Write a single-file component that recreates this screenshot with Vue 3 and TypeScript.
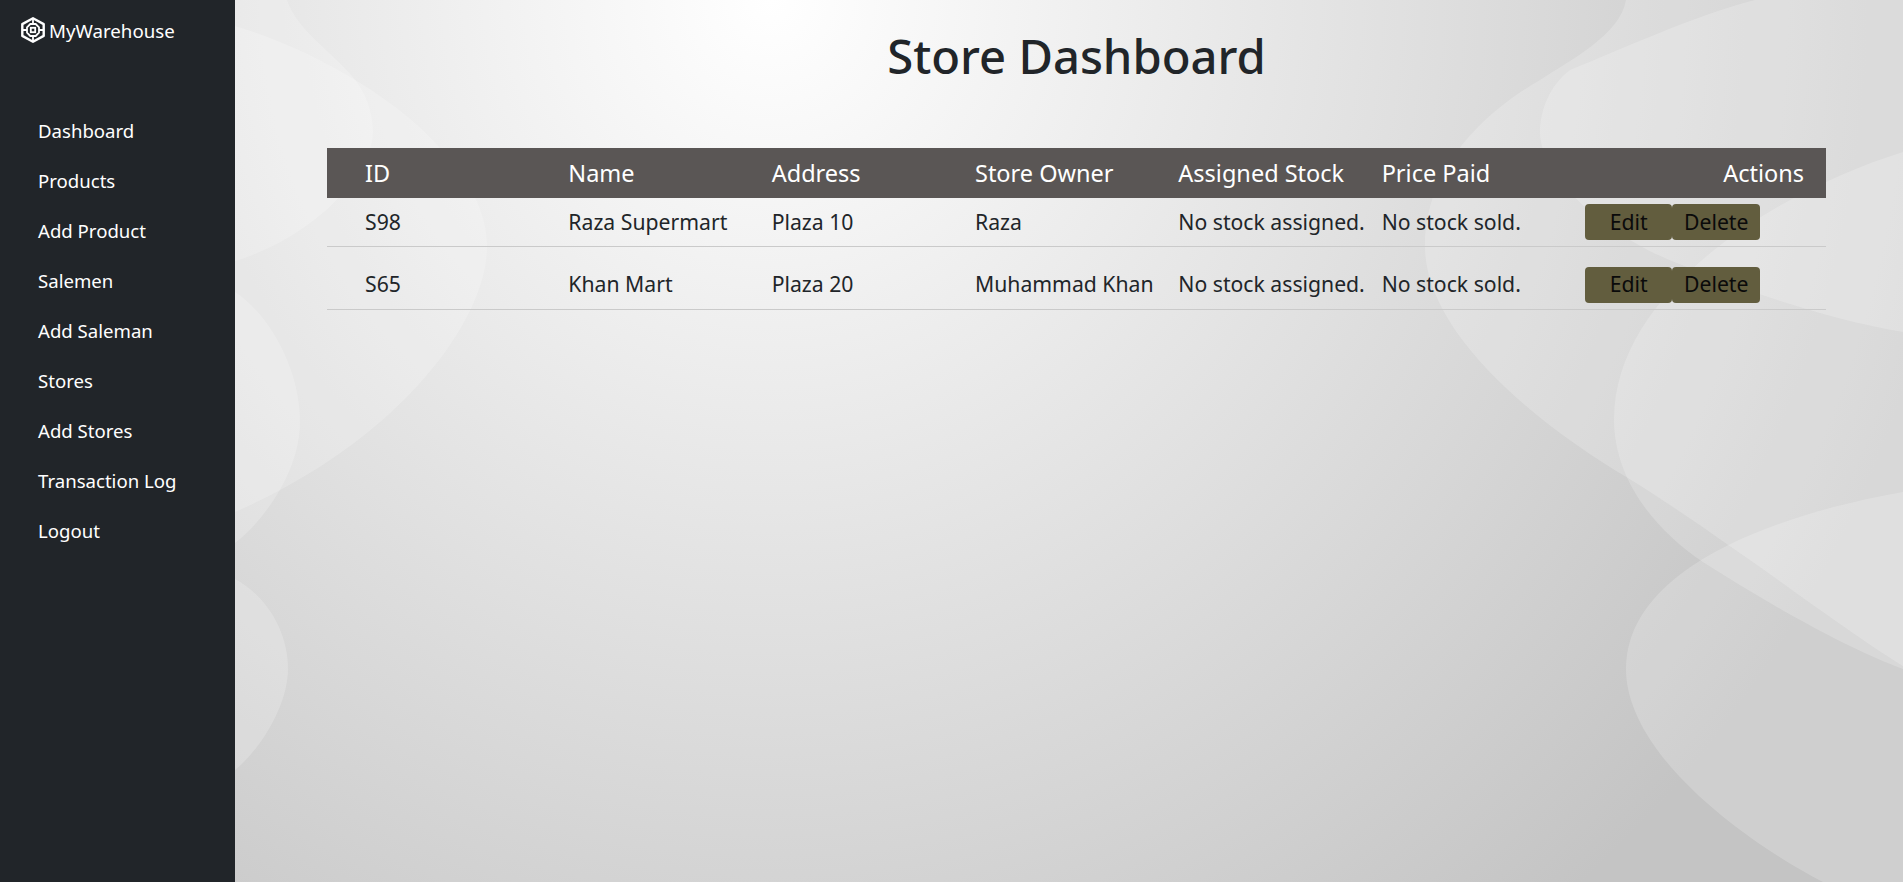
<script setup lang="ts">
interface Store {
  id: string
  name: string
  address: string
  owner: string
  stock: string
  price: string
}

const navItems: string[] = [
  'Dashboard',
  'Products',
  'Add Product',
  'Salemen',
  'Add Saleman',
  'Stores',
  'Add Stores',
  'Transaction Log',
  'Logout',
]

const stores: Store[] = [
  { id: 'S98', name: 'Raza Supermart', address: 'Plaza 10', owner: 'Raza', stock: 'No stock assigned.', price: 'No stock sold.' },
  { id: 'S65', name: 'Khan Mart', address: 'Plaza 20', owner: 'Muhammad Khan', stock: 'No stock assigned.', price: 'No stock sold.' },
]

const headers: string[] = ['ID', 'Name', 'Address', 'Store Owner', 'Assigned Stock', 'Price Paid']

const blobs: string[] = [
  'M287 0 C297 30 330 50 352 76 C366 92 373 112 373 132 C373 170 320 235 235 261 L235 0 Z',
  'M235 26 C300 45 400 95 450 160 C480 195 487 225 487 247 C487 320 400 440 235 512 Z',
  'M235 292 C270 315 300 370 300 422 C300 470 265 520 235 543 Z',
  'M235 579 C265 595 288 630 288 669 C288 705 260 750 235 770 Z',
  'M1626 0 C1620 35 1570 60 1540 80 C1480 115 1425 170 1425 247 C1425 330 1530 420 1628 478 C1720 535 1830 620 1903 666 L1903 0 Z',
  'M1755 0 C1690 17 1620 50 1570 70 C1550 85 1540 110 1540 132 C1540 175 1600 230 1667 259 C1730 285 1820 318 1903 332 L1903 0 Z',
  'M1903 152 C1780 190 1614 290 1614 419 C1614 480 1655 530 1703 562 C1770 605 1850 650 1903 669 Z',
  'M1903 492 C1800 510 1626 560 1626 669 C1626 760 1760 850 1823 882 L1903 882 Z',
]
</script>

<template>
  <div class="layout">
    <aside class="sidebar">
      <div class="brand">
        <svg class="logo" viewBox="0 0 24 26" fill="none" stroke="#fff">
          <path d="M12 1.3 22.7 7.1v11.8L12 24.7 1.3 18.9V7.1Z" stroke-width="2.4" stroke-linejoin="round" />
          <path d="M9.3 7h5.4L18 10.3v5.4L14.7 19H9.3L6 15.7v-5.4Z" stroke-width="1.8" stroke-linejoin="round" />
          <rect x="9.8" y="10.8" width="4.4" height="4.4" stroke-width="1.8" />
          <path d="M12 2v5M12 19v5M2 13h4M18 13h4" stroke-width="1.8" />
        </svg>
        <span>MyWarehouse</span>
      </div>
      <nav class="nav">
        <a v-for="item in navItems" :key="item" class="nav-link">{{ item }}</a>
      </nav>
    </aside>

    <main class="main">
      <svg class="waves" viewBox="235 0 1668 882" preserveAspectRatio="none" aria-hidden="true">
        <path v-for="(d, i) in blobs" :key="i" :d="d" fill="#fff" fill-opacity="0.2" />
      </svg>
      <div class="content">
        <h1 class="title">Store Dashboard</h1>
        <div class="table">
          <div class="head">
            <span v-for="h in headers" :key="h">{{ h }}</span>
            <span class="actions-head">Actions</span>
          </div>
          <div v-for="s in stores" :key="s.id" class="row">
            <span class="cell">{{ s.id }}</span>
            <span class="cell">{{ s.name }}</span>
            <span class="cell">{{ s.address }}</span>
            <span class="cell">{{ s.owner }}</span>
            <span class="cell">{{ s.stock }}</span>
            <span class="cell">{{ s.price }}</span>
            <span class="actions">
              <button class="btn">Edit</button>
              <button class="btn">Delete</button>
            </span>
          </div>
        </div>
      </div>
    </main>
  </div>
</template>

<style scoped>
.layout {
  display: flex;
  height: 882px;
  overflow: hidden;
  font-family: "Noto Sans", "Open Sans", sans-serif;
}
.sidebar {
  width: 235px;
  flex: none;
  background: #212529;
  color: #fff;
}
.brand {
  display: flex;
  align-items: center;
  gap: 4px;
  height: 60px;
  padding-left: 21px;
  font-size: 18.7px;
}
.logo {
  width: 24px;
  height: 26px;
  flex: none;
}
.nav {
  display: flex;
  flex-direction: column;
  padding: 46px 0 0 38px;
}
.nav-link {
  height: 50px;
  line-height: 50px;
  font-size: 18.6px;
  color: #fff;
}
.main {
  position: relative;
  flex: 1;
  background: radial-gradient(circle at 535px 0, #ffffff 0, #c4c4c4 1200px);
}
.waves {
  position: absolute;
  inset: 0;
  width: 100%;
  height: 100%;
}
.content {
  position: relative;
  padding: 0 77px 0 92px;
}
.title {
  margin: 0;
  height: 148px;
  padding-top: 24px;
  box-sizing: border-box;
  text-align: center;
  font-size: 47.2px;
  line-height: 64px;
  font-weight: 500;
  color: #212529;
}
.head,
.row {
  display: grid;
  grid-template-columns: repeat(6, 203.33px) 1fr;
  padding-left: 38px;
  align-items: center;
}
.head {
  height: 50px;
  background: #5a5655;
  color: #fff;
  font-size: 23.5px;
}
.actions-head {
  text-align: right;
  padding-right: 22px;
}
.row {
  height: 49px;
  box-sizing: border-box;
  border-bottom: 1px solid #cacaca;
  font-size: 21.2px;
  color: #212529;
}
.row + .row {
  height: 63px;
  padding-top: 13px;
}
.cell {
  padding-bottom: 2px;
}
.actions {
  display: flex;
}
.btn {
  width: 87.5px;
  height: 36px;
  padding: 0 0 2px;
  border: none;
  border-radius: 4px;
  background: #625d3e;
  color: #0a0a0a;
  font: inherit;
}
</style>

<style>
body {
  margin: 0;
}
</style>
